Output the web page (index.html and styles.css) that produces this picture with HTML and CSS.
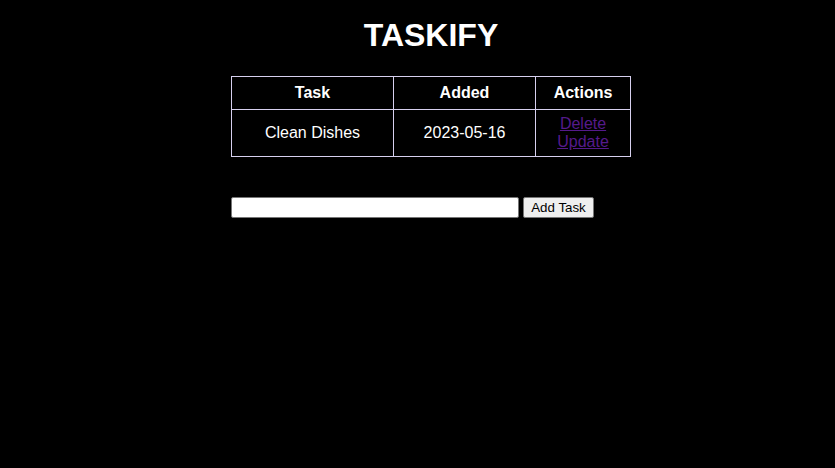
FILE: index.html
```html
<!DOCTYPE html>
<html>
<head>
<meta charset="utf-8">
<link rel="stylesheet" href="styles.css">
</head>
<body>
<main class="app">
  <h1 class="title">TASKIFY</h1>
  <table class="tasks">
    <thead>
      <tr><th class="c1">Task</th><th class="c2">Added</th><th class="c3">Actions</th></tr>
    </thead>
    <tbody>
      <tr>
        <td>Clean Dishes</td>
        <td>2023-05-16</td>
        <td class="actions"><a href="#">Delete</a><a href="#">Update</a></td>
      </tr>
    </tbody>
  </table>
  <form class="add">
    <input class="add-input" type="text">
    <button class="add-btn" type="button">Add Task</button>
  </form>
</main>
</body>
</html>
```
FILE: styles.css
```css
html, body {
  margin: 0;
  background: #000;
}
body {
  font-family: "Liberation Sans", Arial, sans-serif;
  color: #fff;
}
.app {
  width: 400px;
  margin-left: 231px;
  padding-top: 17px;
}
.title {
  margin: 0;
  text-align: center;
  font-size: 32px;
  line-height: 37px;
  font-weight: bold;
}
.tasks {
  margin-top: 22px;
  width: 400px;
  border-collapse: collapse;
  table-layout: fixed;
  font-size: 16px;
}
.tasks th, .tasks td {
  border: 1px solid #d6d0ee;
  text-align: center;
  padding: 0;
}
.tasks th {
  height: 32px;
}
.tasks td {
  height: 46px;
  line-height: 18px;
}
.c1 { width: 161px; }
.c2 { width: 141px; }
.actions a {
  display: block;
  color: #551a8b;
}
.add {
  margin-top: 40px;
  display: flex;
  align-items: center;
  gap: 4px;
}
.add-input {
  width: 288px;
  height: 21px;
  box-sizing: border-box;
  border: 1px solid #767676;
  border-radius: 2px;
  background: #fff;
  padding: 1px 2px;
  margin: 0;
}
.add-btn {
  height: 21px;
  width: 71px;
  box-sizing: border-box;
  font-family: "Liberation Sans", Arial, sans-serif;
  font-size: 13.33px;
  color: #000;
  background: #efefef;
  border: 1px solid #767676;
  border-radius: 2px;
  padding: 0 6px;
  margin: 0;
}
```
